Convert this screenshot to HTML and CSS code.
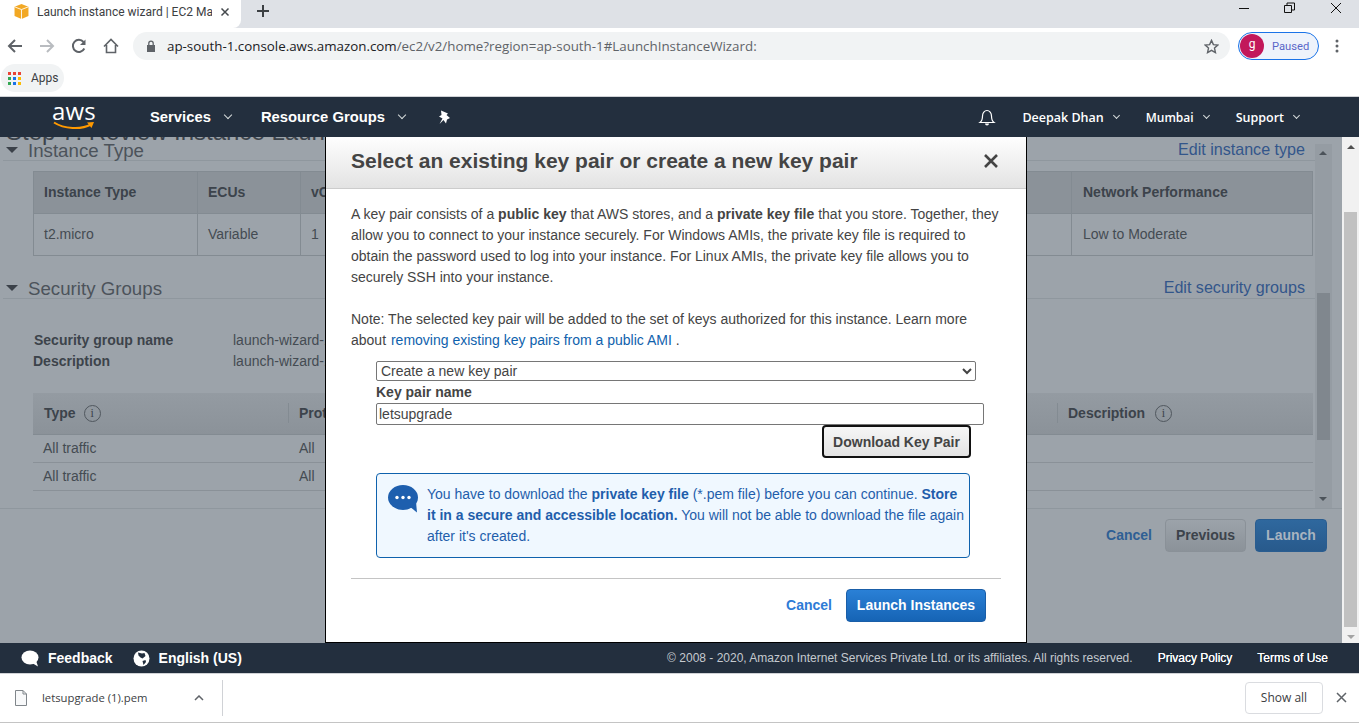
FILE: index.html
```html
<!DOCTYPE html>
<html lang="en">
<head>
<meta charset="utf-8">
<title>Launch instance wizard | EC2 Management Console</title>
<link rel="stylesheet" href="styles.css">
</head>
<body>
<div class="tabstrip">
  <div class="tab">
    <svg class="favicon" width="15" height="15" viewBox="1.500 1 13 14"><path d="M8 1l6.500 2.600v8.600L8 15l-6.500-2.800V3.600z" fill="#f2a824"/><path d="M1.500 3.600L8 6.200l6.500-2.600M8 6.200V15" fill="none" stroke="#fff" stroke-width=".8"/></svg>
    <span class="tab-title">Launch instance wizard | EC2 Management Console</span>
    <svg class="tab-close" width="10" height="10" viewBox="0 0 10 10"><path d="M1.500 1.500l7 7m0-7l-7 7" stroke="#45494d" stroke-width="1.500"/></svg>
  </div>
  <svg class="new-tab" width="14" height="14" viewBox="0 0 14 14"><path d="M7 1v12M1 7h12" stroke="#3c4043" stroke-width="2"/></svg>
  <div class="window-controls">
    <svg width="12" height="12" viewBox="0 0 12 12"><path d="M1 6.500h10" stroke="#111" stroke-width="1"/></svg>
    <svg width="12" height="12" viewBox="0 0 12 12"><path d="M.5 3.500h7v7h-7zM3 3.500v-2.500h7.500v7h-2.500" fill="none" stroke="#111"/></svg>
    <svg width="12" height="12" viewBox="0 0 12 12"><path d="M1 1l10 10M11 1L1 11" stroke="#111"/></svg>
  </div>
</div>
<div class="toolbar">
  <svg class="tool-icon" width="16" height="16" viewBox="0 0 16 16"><path d="M15 8H2M8 2L2 8l6 6" fill="none" stroke="#5f6368" stroke-width="2"/></svg>
  <svg class="tool-icon" width="16" height="16" viewBox="0 0 16 16"><path d="M1 8h13M8 2l6 6-6 6" fill="none" stroke="#b9bcc0" stroke-width="2"/></svg>
  <svg class="tool-icon" width="16" height="16" viewBox="0 0 16 16"><path d="M13.300 10.500A6 6 0 1 1 12.500 4" fill="none" stroke="#5f6368" stroke-width="2"/><path d="M14.500 1.500V7H9z" fill="#5f6368"/></svg>
  <svg class="tool-icon" width="16" height="16" viewBox="0 0 16 16"><path d="M1 8.500L8 1.500l7 7M3.500 7v7.500h9V7" fill="none" stroke="#5f6368" stroke-width="1.600"/></svg>
  <div class="omnibox">
    <svg class="lock" width="10" height="12" viewBox="0 0 10 12"><path d="M1 5h8v7H1z" fill="#5f6368"/><path d="M2.800 5V3.300a2.200 2.200 0 0 1 4.400 0V5" fill="none" stroke="#5f6368" stroke-width="1.300"/></svg>
    <span class="url">ap-south-1.console.aws.amazon.com<span class="url-rest">/ec2/v2/home?region=ap-south-1#LaunchInstanceWizard:</span></span>
    <svg class="star" width="15" height="15" viewBox="0 0 16 16"><path d="M8 1.500l2 4.500 4.800.5-3.600 3.200 1 4.800L8 12.100l-4.200 2.400 1-4.800L1.200 6.500 6 6z" fill="none" stroke="#5f6368" stroke-width="1.500"/></svg>
  </div>
  <div class="profile"><span class="avatar">g</span><span class="paused">Paused</span></div>
  <svg class="menu-dots" width="4" height="14" viewBox="0 0 4 14"><circle cx="2" cy="2" r="1.500" fill="#5f6368"/><circle cx="2" cy="7" r="1.500" fill="#5f6368"/><circle cx="2" cy="12" r="1.500" fill="#5f6368"/></svg>
</div>
<div class="bookmarks">
  <div class="apps">
    <svg width="13" height="13" viewBox="0 0 13 13"><rect x="0" y="0" width="3" height="3" fill="#ea4335"/><rect x="5" y="0" width="3" height="3" fill="#ea4335"/><rect x="10" y="0" width="3" height="3" fill="#ea4335"/><rect x="0" y="5" width="3" height="3" fill="#34a853"/><rect x="5" y="5" width="3" height="3" fill="#1a73e8"/><rect x="10" y="5" width="3" height="3" fill="#fbbc04"/><rect x="0" y="10" width="3" height="3" fill="#34a853"/><rect x="5" y="10" width="3" height="3" fill="#1a73e8"/><rect x="10" y="10" width="3" height="3" fill="#fbbc04"/></svg>
    <span>Apps</span>
  </div>
</div>
<nav class="aws-nav">
  <div class="aws-logo">
    <span class="aws-word">aws</span>
    <svg class="aws-smile" width="42" height="10" viewBox="0 0 42 10"><path d="M1 1.500C11 8 28 9 38 3.500" fill="none" stroke="#f90" stroke-width="2"/><path d="M34 1.500l7-.5-2.500 6z" fill="#f90"/></svg>
  </div>
  <a class="nav-main services">Services<i class="caret"></i></a>
  <a class="nav-main groups">Resource Groups<i class="caret"></i></a>
  <svg class="pin" width="14" height="15" viewBox="0 0 14 15"><path d="M4 .5l7 3-1.500 1.500 3.500 3-3 1.500-1 4-2.500-3.500L2.500 14 5.500 8.500 2 6.500l2.500-1.500z" fill="#fff"/></svg>
  <div class="nav-right">
    <svg class="bell" width="18" height="18" viewBox="0 0 18 18"><path d="M2 14.500c2-1.500 2.500-3.500 2.500-6.500a4.500 5.500 0 0 1 9 0c0 3 .5 5 2.500 6.500z" fill="none" stroke="#fff" stroke-width="1.200"/><path d="M7 15.500a2 2 0 0 0 4 0z" fill="#fff"/></svg>
    <a class="nav-item user">Deepak Dhan<i class="caret small"></i></a>
    <a class="nav-item region">Mumbai<i class="caret small"></i></a>
    <a class="nav-item">Support<i class="caret small"></i></a>
  </div>
</nav>
<main class="stage">
  <div class="page">
    <div class="wizard">
      <h1 class="step-title">Step 7: Review Instance Launch</h1>
      <section class="block">
        <div class="block-head"><i class="tri"></i><h2>Instance Type</h2><a class="edit">Edit instance type</a></div>
        <div class="type-table">
          <div class="tt-row tt-head"><span>Instance Type</span><span>ECUs</span><span>vCPUs</span><span class="c5">Network Performance</span></div>
          <div class="tt-row"><span>t2.micro</span><span>Variable</span><span>1</span><span class="c5">Low to Moderate</span></div>
        </div>
      </section>
      <section class="block">
        <div class="block-head"><i class="tri"></i><h2>Security Groups</h2><a class="edit">Edit security groups</a></div>
        <dl class="sg-info">
          <div><dt>Security group name</dt><dd>launch-wizard-1</dd></div>
          <div><dt class="dt-desc">Description</dt><dd>launch-wizard-1</dd></div>
        </dl>
        <div class="rules">
          <div class="rule-head"><span class="r1">Type <i class="info">i</i></span><span class="r2">Protocol</span><span class="r4">Description <i class="info">i</i></span></div>
          <div class="rule-row"><span class="r1">All traffic</span><span class="r2">All</span></div>
          <div class="rule-row"><span class="r1">All traffic</span><span class="r2">All</span></div>
        </div>
      </section>
      <div class="inner-scroll"><i class="arr up"></i><b class="inner-thumb"></b><i class="arr down"></i></div>
    </div>
    <div class="wizard-actions">
      <a class="w-cancel">Cancel</a>
      <button class="w-prev">Previous</button>
      <button class="w-launch">Launch</button>
    </div>
  </div>
  <div class="page-scroll"><i class="arr up"></i><b class="page-thumb"></b><i class="arr down"></i></div>
  <div class="modal">
    <header class="modal-head">
      <h3>Select an existing key pair or create a new key pair</h3>
      <svg width="16" height="16" viewBox="0 0 16 16"><path d="M2 2l12 12M14 2L2 14" stroke="#444" stroke-width="2.600"/></svg>
    </header>
    <div class="modal-body">
      <p>A key pair consists of a <b>public key</b> that AWS stores, and a <b>private key file</b> that you store. Together, they allow you to connect to your instance securely. For Windows AMIs, the private key file is required to obtain the password used to log into your instance. For Linux AMIs, the private key file allows you to securely SSH into your instance.</p>
      <p class="note">Note: The selected key pair will be added to the set of keys authorized for this instance. Learn more about <a class="link">removing existing key pairs from a public AMI</a> .</p>
      <div class="form">
        <select class="key-select"><option>Create a new key pair</option></select>
        <label class="key-label" for="keyname">Key pair name</label>
        <input class="key-input" id="keyname" value="letsupgrade">
        <div class="dl-row"><button class="dl-btn">Download Key Pair</button></div>
        <div class="notice">
          <svg width="30" height="28" viewBox="0 0 30 28"><ellipse cx="15" cy="12.500" rx="15" ry="12.500" fill="#1e5fae"/><path d="M21 21l8 6.500-1-11z" fill="#1e5fae"/><circle cx="9" cy="12.500" r="1.700" fill="#fff"/><circle cx="15" cy="12.500" r="1.700" fill="#fff"/><circle cx="21" cy="12.500" r="1.700" fill="#fff"/></svg>
          <p>You have to download the <b>private key file</b> (*.pem file) before you can continue. <b>Store it in a secure and accessible location.</b> You will not be able to download the file again after it's created.</p>
        </div>
      </div>
    </div>
    <footer class="modal-foot">
      <a class="m-cancel">Cancel</a>
      <button class="m-launch">Launch Instances</button>
    </footer>
  </div>
</main>
<footer class="aws-foot">
  <svg class="fb-icon" width="18" height="17" viewBox="0 0 18 17"><ellipse cx="9" cy="7.500" rx="8.500" ry="7" fill="#fff"/><path d="M11 13l6 3.500-2-6z" fill="#fff"/></svg>
  <a class="foot-main">Feedback</a>
  <svg class="globe" width="17" height="17" viewBox="0 0 17 17"><circle cx="8.500" cy="8.500" r="8" fill="#fff"/><path d="M5 2.500l4 1 2.500-.5 1 3-3 2.500-2-1-2-2zM9.500 11l3-1 .5 2-2.500 3z" fill="#232f3e"/></svg>
  <a class="foot-main">English (US)</a>
  <span class="copyright">© 2008 - 2020, Amazon Internet Services Private Ltd. or its affiliates. All rights reserved.</span>
  <a class="foot-link">Privacy Policy</a>
  <a class="foot-link">Terms of Use</a>
</footer>
<div class="downloads">
  <svg class="file" width="12" height="16" viewBox="0 0 12 16"><path d="M.5.500h7.500l3.500 3.500v11.500H.5z" fill="#f8f9fa" stroke="#80868b"/><path d="M8 .500V4h3.500" fill="none" stroke="#80868b"/></svg>
  <span class="file-name">letsupgrade (1).pem</span>
  <svg class="chev" width="10" height="6" viewBox="0 0 10 6"><path d="M1 5l4-4 4 4" fill="none" stroke="#5f6368" stroke-width="1.500"/></svg>
  <i class="dl-sep"></i>
  <button class="show-all">Show all</button>
  <svg class="dl-close" width="11" height="11" viewBox="0 0 11 11"><path d="M1 1l9 9M10 1l-9 9" stroke="#5f6368" stroke-width="1.500"/></svg>
</div>
</body>
</html>
```
FILE: styles.css
```css
* { box-sizing: border-box; }
html, body { margin: 0; padding: 0; height: 723px; overflow: hidden; background: #fff; }
body { font-family: "Liberation Sans", Arial, sans-serif; font-size: 14px; color: #444; display: flex; flex-direction: column; }
i { font-style: normal; display: block; }
a { text-decoration: none; }
h1, h2, h3, p, dl, dd { margin: 0; font-weight: normal; }
button { font-family: inherit; }

/* browser chrome */
.tabstrip { height: 28px; background: #dee1e6; display: flex; align-items: flex-start; flex: none; }
.tab { width: 241px; height: 28px; background: #fff; border-radius: 0 0 8px 0; display: flex; align-items: center; padding: 0 11px 5px 14px; font-family: Roboto, sans-serif; font-size: 12px; color: #3c4043; }
.tab-title { margin-left: 8px; width: 175px; overflow: hidden; white-space: nowrap; }
.tab-close { margin-left: auto; }
.new-tab { margin: 4px 0 0 15px; }
.window-controls { margin-left: auto; display: flex; gap: 34px; padding: 2px 17px 0 0; }
.toolbar { height: 32px; flex: none; display: flex; align-items: center; background: #fff; padding: 4px 13px 0 7px; }
.tool-icon { margin-right: 16px; flex: none; }
.omnibox { width: 1097px; margin-left: -2px; height: 28px; border-radius: 14px; background: #f1f3f4; display: flex; align-items: center; padding: 0 11px 0 13px; font-family: "Open Sans", sans-serif; font-size: 13.350px; color: #202124; flex: none; }
.url { margin-left: 11px; white-space: nowrap; }
.url-rest { color: #5f6368; }
.star { margin-left: auto; }
.profile { width: 81px; height: 28px; margin-left: 8px; border: 1px solid #1a73e8; border-radius: 14px; background: #eef3fb; display: flex; align-items: center; padding-left: 1px; font-family: Roboto, sans-serif; font-size: 11.200px; color: #5a67c8; flex: none; }
.avatar { width: 24px; height: 24px; border-radius: 50%; background: #c2185b; color: #fff; text-align: center; line-height: 21px; font-size: 12px; }
.paused { margin-left: 8px; }
.menu-dots { margin-left: 16px; flex: none; }
.bookmarks { height: 37px; flex: none; background: #fff; padding: 4px 0 0 1px; border-bottom: 1px solid #d0d2d6; }
.apps { width: 63px; height: 28px; border-radius: 14px; background: #f1f3f4; display: flex; align-items: center; gap: 10px; padding-left: 7px; font-family: Roboto, sans-serif; font-size: 12px; color: #3c4043; }

/* aws nav */
.aws-nav { height: 40px; flex: none; background: #232f3e; display: flex; align-items: center; color: #fff; padding-right: 60px; font-weight: bold; position: relative; z-index: 2; }
.aws-logo { width: 42px; margin-left: 53px; height: 40px; display: flex; flex-direction: column; align-items: center; }
.aws-word { font-family: "Open Sans", sans-serif; font-weight: 400; font-size: 24px; line-height: 22px; margin-top: 3px; letter-spacing: .2px; }
.aws-smile { margin-top: -1px; }
.nav-main { font-size: 14.800px; display: flex; align-items: center; color: #fff; padding-bottom: 1px; }
.services { margin-left: 55px; }
.groups { margin-left: 30px; }
.caret { width: 6px; height: 6px; border: solid #d5dbdb; border-width: 0 1.500px 1.500px 0; transform: rotate(45deg); margin: -3px 0 0 14px; }
.caret.small { width: 5px; height: 5px; margin-left: 10px; }
.pin { margin-left: 32px; }
.nav-right { margin-left: auto; display: flex; align-items: center; font-size: 13px; }
.nav-item { display: flex; align-items: center; color: #fff; font-family: "Open Sans", sans-serif; font-weight: 600; font-size: 12.500px; }
.bell { margin-right: 26px; }
.user { margin-right: 27px; }
.region { margin-right: 27px; font-size: 12px; }

/* dimmed page */
.stage { height: 506px; flex: none; position: relative; overflow: hidden; background: #9ca3aa; }
.page { width: 1343px; height: 506px; overflow: hidden; }
.wizard { display: flow-root; height: 372px; position: relative; border-bottom: 1px solid #8f979e; }
.step-title { font-size: 24px; line-height: 28px; height: 19px; margin: -19px 0 0 6px; color: #3c434b; white-space: nowrap; }
.block { padding-left: 3px; margin-right: 28px; position: relative; }
.block-head { display: flex; align-items: center; height: 24px; padding-top: 2px; border-bottom: 1px solid #8f979e; }
.tri { width: 0; height: 0; border: solid transparent; border-width: 6px 6px 0; border-top-color: #3b4149; margin: 0 10px 0 3px; }
.block-head h2 { font-size: 18.700px; color: #4c535b; margin-top: 2px; }
.edit { margin-left: auto; font-size: 16.100px; color: #33568a; margin-right: 10px; }
.type-table { margin: 10px 0 0 30px; border: 1px solid #838b92; width: 1280px; }
.tt-row { display: grid; grid-template-columns: 164px 103px 1fr 240px; height: 41px; align-items: center; font-size: 14px; color: #444b52; }
.tt-row span { height: 100%; display: flex; align-items: center; padding: 0 0 2px 10px; border-right: 1px solid #838b92; }
.tt-row .c5 { border-right: 0; padding-left: 11px; }
.tt-head { height: 42px; background: #8b9299; font-weight: bold; border-bottom: 1px solid #838b92; color: #3c434b; }
.block + .block { margin-top: 19px; }
.sg-info { margin: 30px 0 0 31px; }
.sg-info div { display: flex; height: 21px; align-items: center; }
.sg-info dt { width: 199px; font-weight: bold; color: #3c434b; }
.sg-info .dt-desc { margin-left: -1px; width: 200px; }
.sg-info dd { color: #444b52; }
.rules { margin: 22px 0 0 30px; width: 1280px; color: #444b52; }
.rule-head { height: 42px; display: flex; align-items: center; padding-bottom: 1px; background: linear-gradient(#949ba2, #8b9299); border-bottom: 1px solid #838b92; font-weight: bold; color: #3c434b; }
.rule-row { height: 28px; display: flex; align-items: center; padding-bottom: 2px; border-bottom: 1px solid #8a9198; }
.r1 { width: 256px; padding-left: 10px; display: flex; align-items: center; gap: 8px; }
.rule-head .r1 { padding-left: 11px; border-right: 1px solid #838b92; height: 20px; }
.r2 { padding-left: 10px; }
.r4 { margin-left: auto; width: 256px; height: 20px; padding-left: 10px; border-left: 1px solid #838b92; display: flex; align-items: center; gap: 10px; }
.info { width: 17px; height: 17px; border: 1px solid #50575e; border-radius: 50%; font-size: 12px; line-height: 15px; text-align: center; font-weight: normal; font-family: "Liberation Serif", serif; }
.inner-scroll { position: absolute; right: 11px; top: 7px; width: 17px; bottom: 0; background: #959ca3; display: block; }
.inner-thumb { position: absolute; left: 2px; right: 2px; top: 149px; height: 147px; background: #80878e; }
.arr { position: absolute; left: 4px; width: 0; height: 0; border: solid transparent; border-width: 0 4px; }
.arr.up { top: 7px; border-bottom: 4px solid #4c535a; }
.arr.down { bottom: 7px; border-top: 4px solid #4c535a; }
.wizard-actions { display: flex; align-items: center; justify-content: flex-end; padding: 10px 16px 0 0; gap: 9px; }
.w-cancel { font-weight: bold; color: #2f5f94; margin: -1px 4px 0 0; }
.w-prev, .w-launch { height: 33px; border-radius: 4px; font-weight: bold; font-size: 14px; padding: 0 0 2px; }
.w-prev { width: 81px; background: linear-gradient(#9ca3aa, #8b9299); border: 1px solid #8a9198; color: #3c434b; }
.w-launch { width: 72px; background: linear-gradient(#2f689e, #285a8c); border: 1px solid #2a5d90; color: #a8b4c0; }
.page-scroll { position: absolute; right: 0; top: 0; bottom: 0; width: 17px; background: #f1f1f1; }
.page-thumb { position: absolute; left: 2px; right: 2px; top: 75px; bottom: 16px; background: #c1c1c1; }
.page-scroll .arr { left: 5px; }
.page-scroll .arr.up { top: 8px; border-bottom-color: #505050; }
.page-scroll .arr.down { bottom: 4px; border-top-color: #a3a3a3; }

/* modal */
.modal { position: absolute; left: 325px; top: 0; width: 702px; height: 506px; background: #fff; border: solid #000; border-width: 0 1px 1px; display: flex; flex-direction: column; }
.modal-head { height: 52px; flex: none; background: linear-gradient(#fefefe, #e3e3e3); border-bottom: 1px solid #ccc; display: flex; align-items: center; justify-content: space-between; padding: 0 27px 3px 25px; }
.modal-head h3 { font-size: 21px; font-weight: bold; color: #444; }
.modal-body { flex: 1; padding: 15px 25px 0; line-height: 21px; }
.modal-body > p { width: 650px; }
.modal-body .note { margin-top: 21px; }
.link { color: #0f62ad; margin-left: 1px; }
.form { margin: 10px 0 0 25px; }
.key-select { display: block; width: 600px; height: 20px; border: 1px solid #767676; border-radius: 2px; background: #fff; font-family: inherit; font-size: 14px; color: #444; padding: 0; }
.key-label { display: block; font-weight: bold; height: 21px; line-height: 21px; margin-top: 1px; }
.key-input { display: block; width: 608px; height: 22px; border: 1px solid #767676; border-radius: 2px; padding: 0 2px; font-family: inherit; font-size: 14px; color: #444; outline: 0; }
.dl-row { width: 595px; display: flex; justify-content: flex-end; }
.dl-btn { width: 149px; height: 33px; background: linear-gradient(#f6f6f6, #e3e3e3); border: 2px solid #111; border-radius: 4px; font-weight: bold; font-size: 14px; color: #444; padding: 0; }
.notice { width: 594px; height: 85px; margin-top: 15px; background: #f0f8ff; border: 1px solid #0f62ad; border-radius: 4px; display: flex; padding: 10px 0 0 11px; gap: 9px; }
.notice svg { flex: none; margin-top: 1px; }
.notice p { color: #1f5eab; width: 540px; }
.modal-foot { flex: none; height: 64px; margin: 0 25px; border-top: 1px solid #c4c4c4; display: flex; align-items: flex-start; justify-content: flex-end; padding: 10px 15px 0 0; gap: 14px; }
.m-cancel { font-weight: bold; color: #2e7bd6; line-height: 33px; }
.m-launch { width: 140px; height: 33px; border: 1px solid #1a5ea8; border-radius: 4px; background: linear-gradient(#2a80d6, #1664b5); color: #fff; font-weight: bold; font-size: 14px; padding: 0 0 2px; }

/* aws footer */
.aws-foot { height: 30px; flex: none; background: #232f3e; color: #fff; display: flex; align-items: center; padding: 0 31px 0 21px; font-size: 12px; }
.foot-main { font-weight: bold; font-size: 14px; color: #fff; margin-left: 9px; }
.globe { margin-left: 20px; }
.copyright { margin-left: auto; color: #c5cacf; }
.foot-link { color: #fff; margin-left: 25px; text-shadow: 0 0 .4px #fff; }

/* download bar */
.downloads { height: 50px; flex: none; background: #fff; border-top: 1px solid #d0d2d6; border-bottom: 1px solid #c4c4c4; display: flex; align-items: center; padding: 0 12px 1px 15px; font-family: "Open Sans", sans-serif; font-size: 11.300px; color: #3c4043; }
.file-name { margin-left: 15px; }
.chev { margin-left: 47px; }
.dl-sep { width: 1px; height: 36px; background: #d0d2d6; margin-left: 18px; }
.show-all { margin-left: auto; width: 78px; height: 32px; background: #fff; border: 1px solid #dadce0; border-radius: 4px; font-family: "Open Sans", sans-serif; font-size: 12px; color: #3c4043; padding: 0; }
.dl-close { margin-left: 13px; }
```
